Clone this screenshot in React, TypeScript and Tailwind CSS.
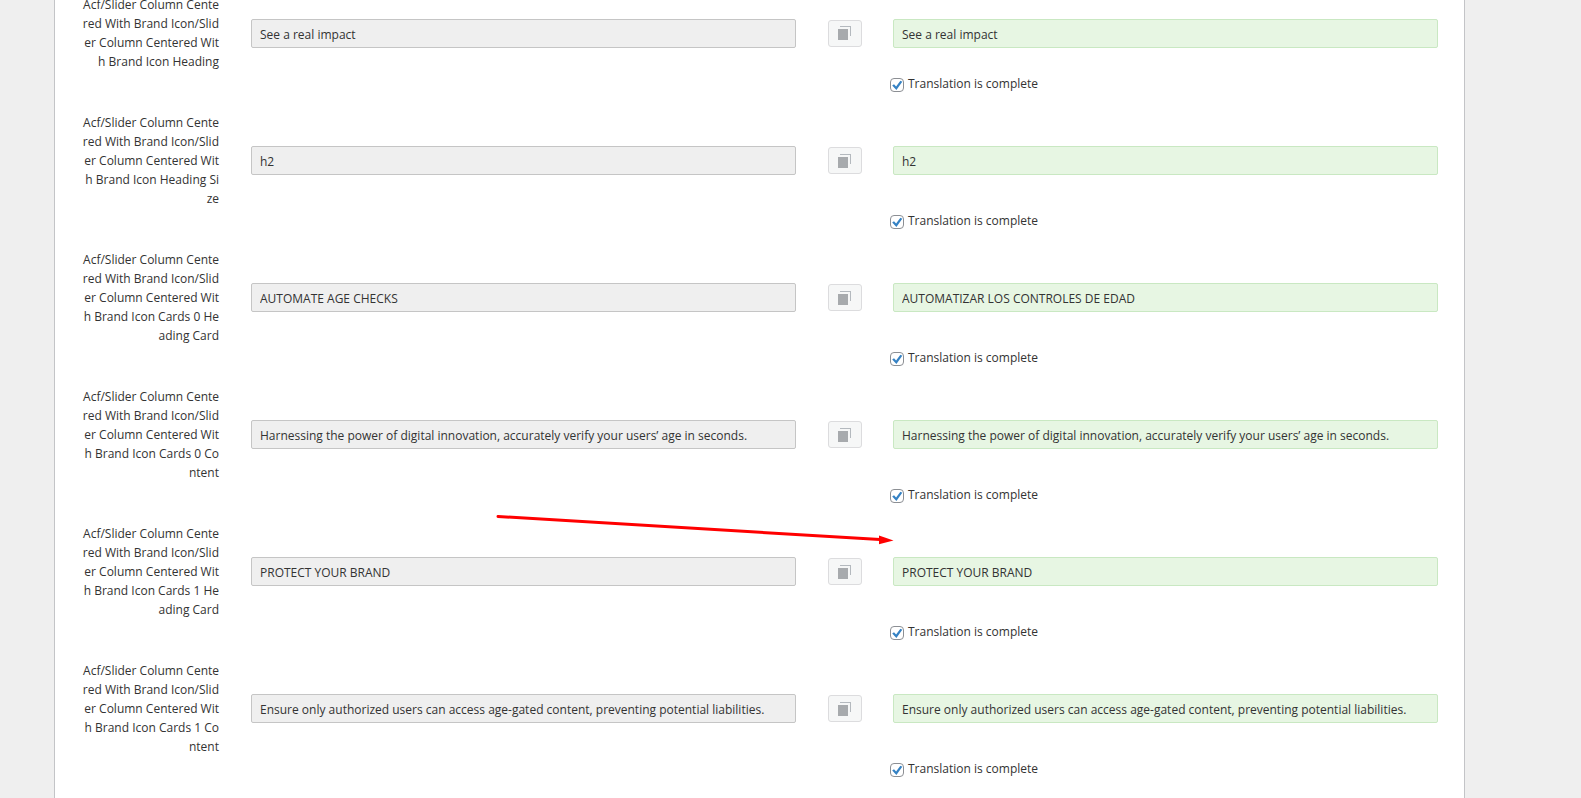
import React from 'react';

interface TranslationField {
  id: string;
  label: string;
  original: string;
  translation: string;
}

const FIELD_PREFIX = 'Acf/Slider Column Cente\nred With Brand Icon/Slid\ner Column Centered Wit\n';

const fields: TranslationField[] = [
  {
    id: 'heading',
    label: 'h Brand Icon Heading',
    original: 'See a real impact',
    translation: 'See a real impact',
  },
  {
    id: 'heading-size',
    label: 'h Brand Icon Heading Si\nze',
    original: 'h2',
    translation: 'h2',
  },
  {
    id: 'cards-0-heading',
    label: 'h Brand Icon Cards 0 He\nading Card',
    original: 'AUTOMATE AGE CHECKS',
    translation: 'AUTOMATIZAR LOS CONTROLES DE EDAD',
  },
  {
    id: 'cards-0-content',
    label: 'h Brand Icon Cards 0 Co\nntent',
    original: 'Harnessing the power of digital innovation, accurately verify your users’ age in seconds.',
    translation: 'Harnessing the power of digital innovation, accurately verify your users’ age in seconds.',
  },
  {
    id: 'cards-1-heading',
    label: 'h Brand Icon Cards 1 He\nading Card',
    original: 'PROTECT YOUR BRAND',
    translation: 'PROTECT YOUR BRAND',
  },
  {
    id: 'cards-1-content',
    label: 'h Brand Icon Cards 1 Co\nntent',
    original: 'Ensure only authorized users can access age-gated content, preventing potential liabilities.',
    translation: 'Ensure only authorized users can access age-gated content, preventing potential liabilities.',
  },
];

const CopyIcon: React.FC = () => (
  <svg width="13" height="14" viewBox="0 0 13 14" aria-hidden="true">
    <path d="M0 3h10v11H0z" fill="#a7aaad" />
    <path d="M2 0h11v10h-1V1H2z" fill="#b4b9be" />
  </svg>
);

const CompleteCheckbox: React.FC<{ id: string }> = ({ id }) => (
  <div className="flex items-start gap-1">
    <span className="relative mt-1 block h-[14px] w-[14px]">
      <input
        id={id}
        type="checkbox"
        defaultChecked
        className="peer block h-[14px] w-[14px] appearance-none rounded-[4px] border border-[#8c8f94] bg-white"
      />
      <svg
        className="pointer-events-none absolute inset-0 hidden peer-checked:block"
        width="14"
        height="14"
        viewBox="0 0 14 14"
        aria-hidden="true"
      >
        <path d="M2.2 7.6l1.8-1.300 2.100 2.100 4.300-5.600 1.900 1-5.900 8.200z" fill="#3582c4" />
      </svg>
    </span>
    <label htmlFor={id}>Translation is complete</label>
  </div>
);

const FieldRow: React.FC<{ field: TranslationField }> = ({ field }) => (
  <div className="grid grid-cols-[196px_1fr_97px_1fr] pr-[26px]">
    <label htmlFor={`${field.id}-translation`} className="whitespace-pre-line pr-8 text-right">
      {FIELD_PREFIX + field.label}
    </label>
    <div className="flex items-center">
      <input
        type="text"
        readOnly
        aria-label="Original"
        defaultValue={field.original}
        className="h-[29px] w-full rounded-[2px] border border-[#c5c5c5] bg-[#efefef] px-2 pt-[2px] outline-none"
      />
    </div>
    <div className="flex items-center justify-center">
      <button
        type="button"
        aria-label="Copy from original"
        className="flex h-[27px] w-[34px] items-center justify-center rounded-[3px] border border-[#dcdcde] bg-[#f6f7f7]"
      >
        <CopyIcon />
      </button>
    </div>
    <div className="flex items-center">
      <input
        id={`${field.id}-translation`}
        type="text"
        defaultValue={field.translation}
        className="h-[29px] w-full rounded-[2px] border border-[#c9e8c2] bg-[#e7f6e3] px-2 pt-[2px] outline-none"
      />
    </div>
    <div className="col-start-4 -ml-[3px] h-[42px] pt-[3px]">
      <CompleteCheckbox id={`${field.id}-complete`} />
    </div>
  </div>
);

const App: React.FC = () => {
  return (
    <div className="relative min-h-screen overflow-hidden bg-[#efefef] pr-[116px] pl-[54px] font-['Open_Sans',sans-serif] text-[12px] leading-[19px] text-[#333333]">
      <main className="min-h-screen border-x border-[#c3c4c7] bg-white">
        <div className="-mt-[5px]">
          {fields.map((field) => (
            <FieldRow key={field.id} field={field} />
          ))}
        </div>
      </main>

      <svg
        className="pointer-events-none absolute top-[510px] left-[490px]"
        width="410"
        height="40"
        viewBox="0 0 410 40"
        aria-hidden="true"
      >
        <path d="M8 6.5L390 29.5" stroke="#ff0000" strokeWidth="3" strokeLinecap="round" />
        <path d="M389 25.500l14.500 5-14.500 3.800z" fill="#ff0000" />
      </svg>
    </div>
  );
};

export default App;
